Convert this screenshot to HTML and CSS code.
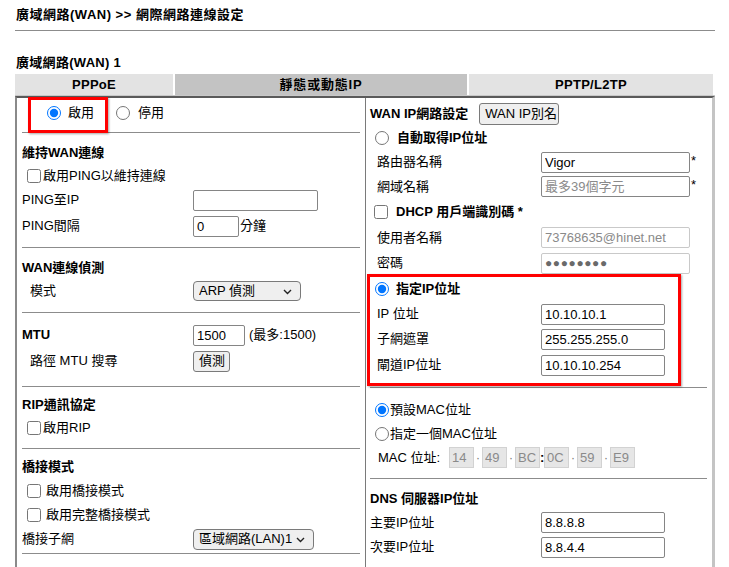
FILE: index.html
```html
<!DOCTYPE html>
<html lang="zh-Hant">
<head>
<meta charset="utf-8">
<title>網際網路連線設定</title>
<link rel="stylesheet" href="styles.css">
</head>
<body>
<div class="page">
  <div class="title">廣域網路(WAN) &gt;&gt; 網際網路連線設定</div>
  <div class="subtitle">廣域網路(WAN) 1</div>
  <div class="tabs">
    <div class="tab t1">PPPoE</div>
    <div class="tab t2 active">靜態或動態IP</div>
    <div class="tab t3">PPTP/L2TP</div>
  </div>
  <div class="frame">
    <div class="col left">
      <div class="sec secA">
        <div class="row r30 radios">
          <label class="rad r-on"><input type="radio" name="en" checked><span>啟用</span></label>
          <label class="rad r-off"><input type="radio" name="en"><span>停用</span></label>
        </div>
      </div>
      <div class="sec pt8 pb8">
        <div class="row r24 head">維持WAN連線</div>
        <div class="row r22 cbrow"><input type="checkbox"><span class="cbt">啟用PING以維持連線</span></div>
        <div class="row r26"><span class="lbl">PING至IP</span><input class="txt w125" type="text"></div>
        <div class="row r26"><span class="lbl">PING間隔</span><input class="txt w46" type="text" value="0"><span class="after1">分鐘</span></div>
      </div>
      <div class="sec pt8 pb10">
        <div class="row r24 head">WAN連線偵測</div>
        <div class="row r22"><span class="lbl ind">模式</span>
          <span class="sel"><select class="w108 h20"><option>ARP 偵測</option></select><svg class="chev" width="9" height="6" viewBox="0 0 9 6"><path d="M1 1 L4.5 4.5 L8 1" fill="none" stroke="#222" stroke-width="1.4"/></svg></span>
        </div>
      </div>
      <div class="sec pt10 pb11">
        <div class="row r24"><span class="lbl head">MTU</span><input class="txt w52" type="text" value="1500"><span class="after4">(最多:1500)</span></div>
        <div class="row r28"><span class="lbl ind">路徑 MTU 搜尋</span><button class="btn w37" type="button">偵測</button></div>
      </div>
      <div class="sec pt6 pb9">
        <div class="row r24 head">RIP通訊協定</div>
        <div class="row r22 cbrow"><input type="checkbox"><span class="cbt">啟用RIP</span></div>
      </div>
      <div class="sec pt6 pb2">
        <div class="row r24 head">橋接模式</div>
        <div class="row r24 cbrow"><input type="checkbox"><span class="cbt sp">啟用橋接模式</span></div>
        <div class="row r24 cbrow"><input type="checkbox"><span class="cbt sp">啟用完整橋接模式</span></div>
        <div class="row r24"><span class="lbl">橋接子網</span>
          <span class="sel"><select class="w121 h21"><option>區域網路(LAN)1</option></select><svg class="chev" width="9" height="6" viewBox="0 0 9 6"><path d="M1 1 L4.5 4.5 L8 1" fill="none" stroke="#222" stroke-width="1.4"/></svg></span>
        </div>
      </div>
      <div class="sec rest"></div>
    </div>
    <div class="col right">
      <div class="sec pt4 pb9">
        <div class="row r24"><span class="head">WAN IP網路設定</span><button class="btn alias" type="button">WAN IP別名</button></div>
        <div class="row r24 radrow rr1"><input type="radio" name="ip"><span class="head">自動取得IP位址</span></div>
        <div class="row r24"><span class="lbl rind">路由器名稱</span><input class="txt w149" type="text" value="Vigor"><span class="star">*</span></div>
        <div class="row r25"><span class="lbl rind">網域名稱</span><input class="txt w149" type="text" placeholder="最多39個字元"><span class="star">*</span></div>
        <div class="row r25 dhcp"><input type="checkbox"><span class="head">DHCP 用戶端識別碼 *</span></div>
        <div class="row r27"><span class="lbl rind">使用者名稱</span><input class="txt w149 dis" type="text" value="73768635@hinet.net" disabled></div>
        <div class="row r24"><span class="lbl rind">密碼</span><input class="txt w149 dis dots" type="text" value="●●●●●●●●" disabled></div>
        <div class="row r27 radrow rr2"><input type="radio" name="ip" checked><span class="head">指定IP位址</span></div>
        <div class="row r24"><span class="lbl rind">IP 位址</span><input class="txt w124" type="text" value="10.10.10.1"></div>
        <div class="row r26"><span class="lbl rind">子網遮罩</span><input class="txt w124" type="text" value="255.255.255.0"></div>
        <div class="row r26"><span class="lbl rind">閘道IP位址</span><input class="txt w124" type="text" value="10.10.10.254"></div>
      </div>
      <div class="sec pt10 pb9">
        <div class="row r24 radrow rr3"><input type="radio" name="mac" checked><span>預設MAC位址</span></div>
        <div class="row r24 radrow rr3"><input type="radio" name="mac"><span>指定一個MAC位址</span></div>
        <div class="row r23"><span class="maclbl">MAC 位址:</span>
          <input class="mac" type="text" value="14" disabled><span class="msep">·</span>
          <input class="mac" type="text" value="49" disabled><span class="msep">·</span>
          <input class="mac" type="text" value="BC" disabled><span class="mcol">:</span>
          <input class="mac" type="text" value="0C" disabled><span class="msep">·</span>
          <input class="mac" type="text" value="59" disabled><span class="msep">·</span>
          <input class="mac" type="text" value="E9" disabled>
        </div>
      </div>
      <div class="sec pt8 last">
        <div class="row r24 head">DNS 伺服器IP位址</div>
        <div class="row r23"><span class="lbl">主要IP位址</span><input class="txt w124" type="text" value="8.8.8.8"></div>
        <div class="row r26"><span class="lbl">次要IP位址</span><input class="txt w124" type="text" value="8.8.4.4"></div>
      </div>
    </div>
    <div class="mark mark-l"></div>
    <div class="mark mark-r"></div>
  </div>
</div>
</body>
</html>
```
FILE: styles.css
```css
html, body {
  margin: 0;
  padding: 0;
  background: #fff;
}
body {
  font-family: "Liberation Sans", "Noto Sans CJK TC", sans-serif;
  font-size: 13px;
  color: #000;
  line-height: 16px;
}
.page {
  padding-left: 15px;
  width: 700px;
}
.title {
  font-weight: bold;
  padding: 7px 0 7px 1px;
  border-bottom: 1px solid #8c8c8c;
  letter-spacing: 0.5px;
}
.subtitle {
  font-weight: bold;
  margin-top: 24px;
  padding-left: 1px;
  letter-spacing: 0.3px;
}
.tabs {
  display: flex;
  gap: 2px;
  margin-top: 3px;
  width: 698px;
}
.tab {
  height: 22px;
  line-height: 22px;
  text-align: center;
  font-weight: bold;
  background: #e3e3e3;
  letter-spacing: 0.3px;
}
.tab.active { background: #c3c3c3; letter-spacing: 0.8px; }
.t1 { width: 158px; }
.t2 { width: 292px; }
.t3 { width: 244px; }

.frame {
  position: relative;
  display: flex;
  border-top: 2px solid #5a5a5a;
  border-left: 2px solid #8a8a8a;
  border-right: 3px solid #c4c4c4;
  height: 480px;
  box-shadow: 0 -1px 0 #c8c8c8;
}
.col { box-sizing: border-box; }
.left {
  width: 349px;
  padding: 0 5px;
  border-right: 1px solid #7a7a7a;
}
.right {
  width: 346px;
  padding: 0 5px 0 4px;
}
.sec { border-bottom: 1px solid #8c8c8c; }
.sec.rest, .sec.last { border-bottom: 0; }
.secA { padding-bottom: 4px; }
.pt4 { padding-top: 4px; }
.pt6 { padding-top: 6px; }
.pt8 { padding-top: 8px; }
.pt10 { padding-top: 10px; }
.pb2 { padding-bottom: 2px; }
.pb8 { padding-bottom: 8px; }
.pb9 { padding-bottom: 9px; }
.pb10 { padding-bottom: 10px; }
.pb11 { padding-bottom: 11px; }

.row {
  display: flex;
  align-items: center;
  white-space: nowrap;
}
.r22 { height: 22px; }
.r23 { height: 23px; }
.r24 { height: 24px; }
.r25 { height: 25px; }
.r26 { height: 26px; }
.r27 { height: 27px; }
.r28 { height: 28px; }
.r30 { height: 30px; }

.head { font-weight: bold; }
.lbl {
  width: 171px;
  flex: none;
  box-sizing: border-box;
}
.lbl.ind { padding-left: 8px; font-weight: normal; }
.lbl.head { font-weight: bold; }
.lbl.rind { padding-left: 7px; }

input[type=radio], input[type=checkbox] {
  margin: 0;
  width: 14px;
  height: 14px;
  flex: none;
}
.radios { padding-left: 25px; }
.rad { display: flex; align-items: center; }
.r-on span { margin-left: 7px; }
.r-off { margin-left: 22px; }
.r-off span { margin-left: 8px; }

.cbrow { padding-left: 5px; }
.cbt { margin-left: 2px; }
.cbt.sp { margin-left: 5px; }

.radrow { padding-left: 5px; }
.rr1 span { margin-left: 8px; }
.rr2 span { margin-left: 7px; }
.rr3 span { margin-left: 1px; }
.dhcp { padding-left: 4px; }
.dhcp span { margin-left: 8px; }

.txt {
  box-sizing: border-box;
  height: 21px;
  margin: 0;
  padding: 0 3px;
  border: 1px solid #858585;
  border-radius: 2px;
  font: inherit;
  color: #000;
  background: #fff;
  outline: none;
}
.txt::placeholder { color: #8a8a8a; }
.txt.dis {
  border-color: #c9c9c9;
  color: #8a8a8a;
  background: #fff;
}
.txt.dots {
  color: #6a6a6a;
  font-size: 12px;
  letter-spacing: 0.6px;
}
.w46 { width: 46px; }
.w52 { width: 52px; }
.w124 { width: 124px; }
.w125 { width: 125px; }
.w149 { width: 149px; }
.after1 { margin-left: 1px; }
.after4 { margin-left: 4px; }
.star { margin-left: 1px; align-self: flex-start; margin-top: 3px; }

.sel {
  position: relative;
  display: inline-block;
  height: 21px;
}
.sel select {
  -webkit-appearance: none;
  appearance: none;
  box-sizing: border-box;
  margin: 0;
  padding: 0 0 0 5px;
  font: inherit;
  color: #000;
  background: #efefef;
  border: 1px solid #7a7a7a;
  border-radius: 4px;
  outline: none;
}
.w108 { width: 108px; }
.w121 { width: 121px; }
.h20 { height: 20px; }
.h21 { height: 21px; }
.sel:has(.h20) { height: 20px; }
.chev {
  position: absolute;
  right: 9px;
  top: 50%;
  margin-top: -2px;
  pointer-events: none;
}

.btn {
  box-sizing: border-box;
  height: 21px;
  margin: 0;
  padding: 0 5px;
  font: inherit;
  color: #000;
  background: #efefef;
  border: 1px solid #7a7a7a;
  border-radius: 3px;
  text-align: left;
}
.w37 { width: 37px; }
.alias { width: 80px; height: 22px; margin-left: 11px; }

.maclbl {
  width: 79px;
  flex: none;
  box-sizing: border-box;
  padding-left: 8px;
}
.mac {
  box-sizing: border-box;
  width: 25px;
  height: 21px;
  margin: 0;
  padding: 0 2px;
  border: 1px solid #d2d2d2;
  border-radius: 0;
  background: #e6e6e6;
  color: #8a8a8a;
  font: inherit;
}
.msep {
  width: 8px;
  text-align: center;
  color: #777;
  font-size: 12px;
}
.mcol {
  width: 4px;
  text-align: center;
  font-weight: bold;
}

.mark {
  position: absolute;
  box-sizing: border-box;
  border: 3px solid #ff0000;
  box-shadow: 1px 1px 2px rgba(0,0,0,0.35);
  pointer-events: none;
}
.mark-l { left: 11px; top: -1px; width: 80px; height: 36px; }
.mark-r { left: 350px; top: 176px; width: 314px; height: 112px; }
```
